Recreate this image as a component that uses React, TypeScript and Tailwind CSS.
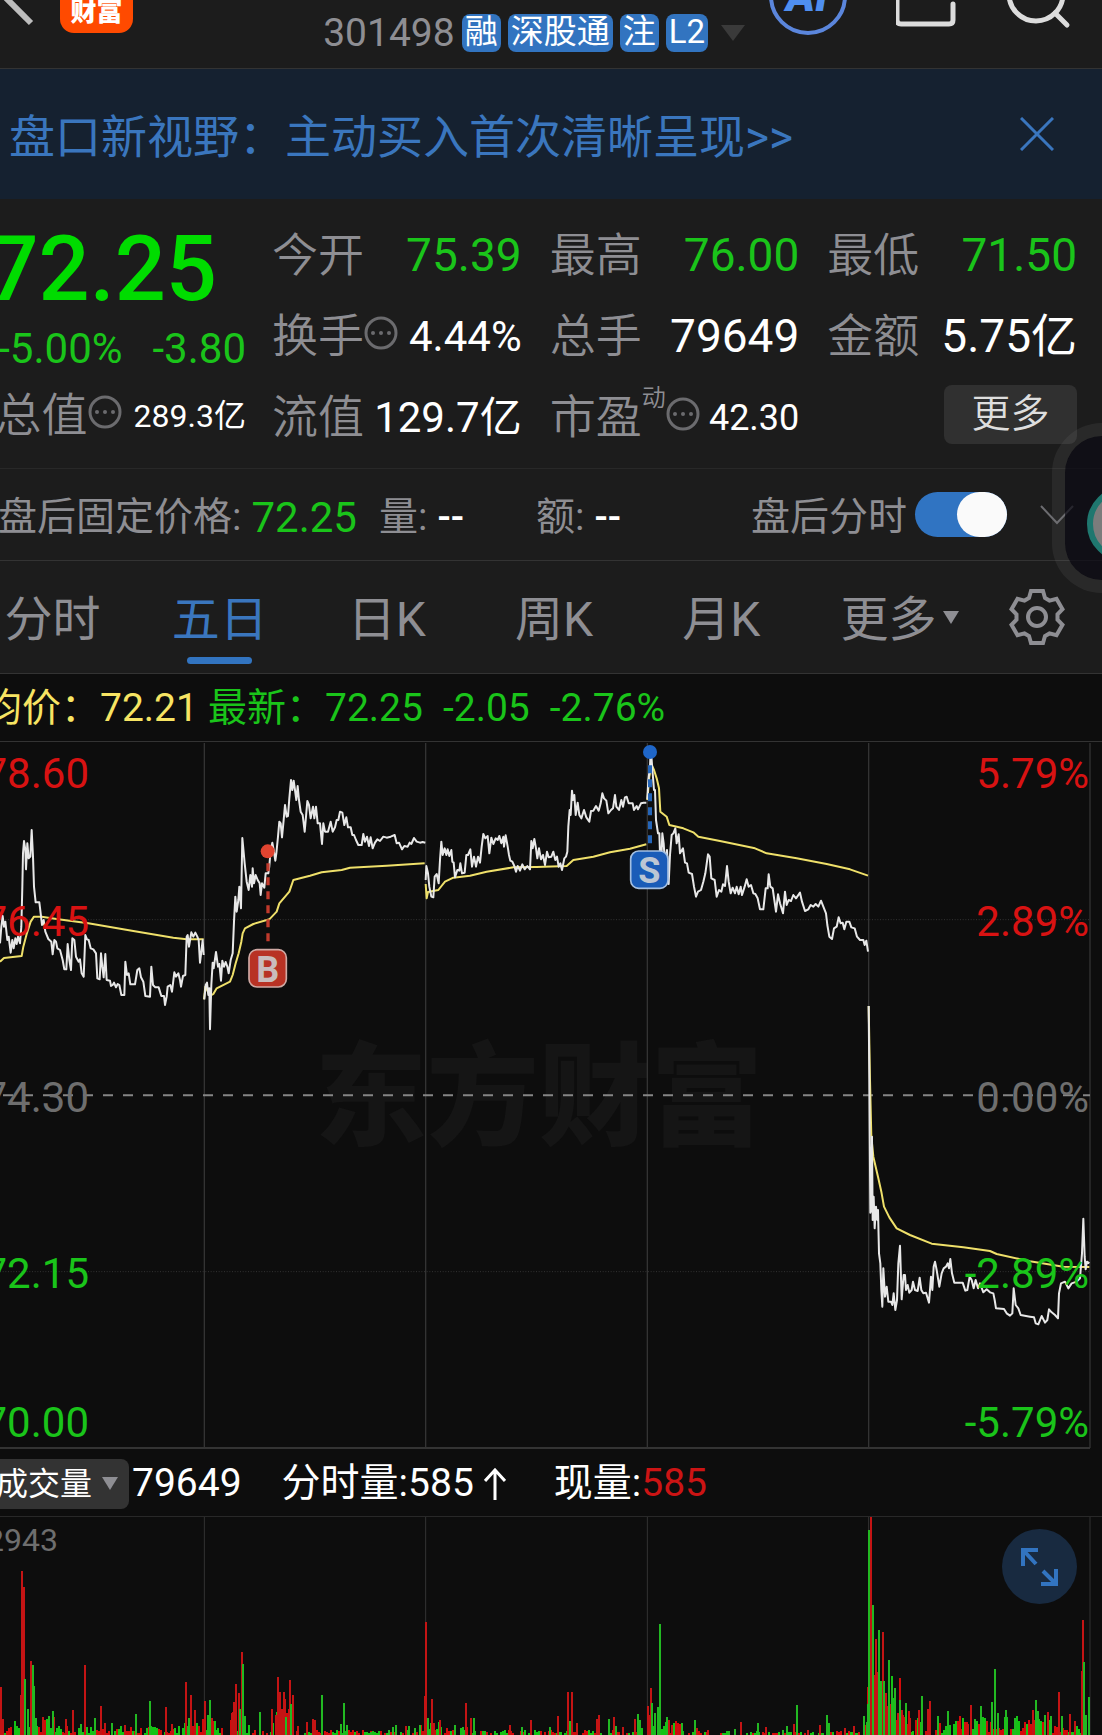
import React, { useState } from "react";

const DAY_LINES = [613, 1277, 1942, 2606, 3270];

// Each session is drawn in its own local space, see the translate on the group.
const SESSIONS = [
  {
    shift: "translate(0 0)",
    avg: "0,665 12,654 65,648 70,620 80,582 92,545 102,530 125,530 175,538 265,550 400,573 520,593 560,598 611,598",
    price:
      "0,610 4,560 8,528 12,560 16,545 22,600 26,590 32,638 37,600 41,625 46,595 50,612 54,590 60,610 64,560 67,440 69,340 72,303 76,330 78,388 82,310 86,355 91,350 95,270 99,350 102,440 107,487 118,487 122,520 126,555 131,540 136,575 145,597 154,605 158,643 163,600 168,605 172,625 180,630 188,660 193,688 199,688 203,612 208,660 213,690 217,595 223,600 228,650 236,665 240,658 245,700 251,710 256,585 261,598 266,600 272,625 280,628 288,640 292,715 299,718 303,640 307,680 311,712 316,642 320,720 330,722 333,738 338,735 342,728 348,742 353,732 358,735 364,765 373,765 376,665 381,705 386,700 391,733 405,733 412,690 418,685 423,712 430,725 436,768 450,770 454,680 459,735 466,742 476,742 484,768 492,768 495,795 500,770 503,740 511,735 516,755 523,697 528,710 535,700 540,720 543,740 549,708 556,705 560,590 563,585 567,620 574,577 580,590 586,578 592,590 596,600 600,668 604,635 608,600 611,645",
  },
  {
    shift: "translate(0 0)",
    avg: "612,778 616,740 630,768 640,762 650,745 690,725 698,705 707,670 716,640 724,605 728,580 735,565 760,552 808,538 830,515 838,490 868,455 880,420 930,407 965,397 1025,390 1050,383 1160,377 1274,370",
    price:
      "613,778 617,735 621,728 625,765 628,745 630,868 634,735 638,668 641,685 648,636 654,680 658,672 663,722 667,662 672,680 677,666 682,680 686,700 692,660 698,640 702,545 706,470 710,515 715,480 718,440 723,505 727,294 734,370 740,425 746,450 751,405 756,440 758,385 762,430 767,405 773,420 779,430 782,465 786,430 793,443 797,400 805,400 808,378 812,330 817,308 821,330 826,362 829,340 834,290 838,245 842,250 846,292 851,240 855,195 860,230 864,228 868,175 873,120 877,150 881,122 885,150 889,180 893,138 897,180 902,215 908,225 914,275 918,230 922,183 927,195 932,235 939,200 943,235 948,200 953,250 960,250 966,312 970,250 975,275 984,275 992,245 998,275 1005,262 1010,240 1015,240 1020,215 1027,218 1033,255 1039,232 1044,262 1052,262 1057,285 1062,285 1068,300 1075,315 1085,315 1090,282 1095,305 1101,290 1107,318 1112,292 1118,325 1125,308 1132,298 1140,303 1150,290 1160,293 1172,290 1184,285 1190,310 1197,308 1206,328 1213,318 1223,320 1229,308 1234,312 1242,294 1250,305 1260,308 1268,306 1276,308",
  },
  {
    shift: "translate(1260 0)",
    avg: "17,432 20,475 24,456 55,450 75,425 100,413 150,407 200,395 280,382 350,381 440,378 460,360 520,350 570,337 630,326 679,313",
    price:
      "17,420 19,378 24,400 28,440 34,470 40,472 44,410 50,402 56,430 60,360 64,305 68,345 74,325 79,345 83,328 88,348 94,330 97,365 101,368 105,412 112,390 118,392 121,370 126,400 134,398 139,345 144,345 151,328 156,380 162,350 168,380 174,350 180,368 185,320 190,282 196,295 203,288 208,340 214,293 220,312 227,295 233,300 238,288 244,310 250,290 252,320 257,286 263,320 267,345 271,362 277,365 283,378 288,395 293,378 300,392 307,373 314,388 322,378 330,388 334,303 338,325 343,297 348,325 352,355 357,325 363,358 369,345 375,375 381,335 386,352 394,350 400,335 406,360 411,350 416,380 421,370 426,390 433,355 438,350 442,335 445,260 449,210 452,225 456,152 459,180 463,165 467,225 473,188 478,225 484,235 492,210 499,232 508,245 513,213 520,212 528,198 536,212 542,190 547,160 552,175 559,182 565,220 573,210 579,205 585,165 589,200 597,210 604,180 609,200 615,172 620,170 626,190 632,190 638,190 642,210 650,198 654,208 663,190 671,188 679,188",
  },
  {
    shift: "translate(1260 0)",
    avg: "682,180 688,110 695,75 702,90 710,115 717,145 721,215 740,230 748,255 790,265 820,277 835,290 900,303 1005,325 1040,340 1130,355 1220,372 1290,388 1344,407",
    price:
      "682,178 685,120 690,80 692,28 695,60 698,100 702,150 705,150 708,240 714,280 718,280 720,340 723,383 727,280 731,310 735,370 741,330 746,432 750,345 755,285 760,280 766,265 770,310 776,283 780,340 789,325 795,368 801,370 806,398 816,402 822,440 828,470 834,455 843,450 850,425 856,400 864,343 869,350 874,415 884,420 890,470 897,450 904,455 909,433 915,438 921,378 926,425 932,460 938,443 945,460 950,440 956,463 962,440 966,465 974,440 980,418 986,440 993,435 1000,460 1006,462 1013,475 1020,508 1030,508 1037,445 1043,445 1046,403 1051,440 1058,445 1063,480 1068,515 1074,463 1080,490 1089,520 1095,455 1100,495 1106,480 1113,483 1120,465 1128,475 1140,458 1146,485 1155,513 1165,508 1172,495 1180,500 1187,492 1195,500 1203,482 1210,500 1218,520 1222,555 1228,590 1236,597 1242,565 1250,560 1256,532 1262,550 1268,548 1273,568 1279,545 1288,545 1294,562 1304,565 1311,590 1320,600 1330,600 1334,615 1339,602 1344,635",
  },
  {
    shift: "translate(2550 720)",
    avg: "56,78 60,300 64,470 70,530 85,595 94,635 102,680 118,712 140,745 180,765 245,791 340,802 420,813 440,822 540,844 640,860 718,861",
    price:
      "56,78 58,300 61,698 63,690 66,470 68,720 71,650 74,745 78,680 82,720 84,690 87,820 91,850 94,930 97,980 100,865 105,950 110,920 115,965 123,965 127,975 131,940 136,990 141,960 145,850 150,797 155,958 161,885 165,885 168,930 173,915 178,938 185,930 189,905 195,930 203,933 209,893 214,930 220,940 228,938 237,968 243,890 247,930 251,860 255,845 260,870 268,920 275,880 281,865 288,860 293,850 297,865 301,837 306,880 313,908 338,908 346,932 352,930 359,890 365,900 371,925 377,900 384,925 390,910 400,937 410,928 420,937 430,940 434,960 438,985 462,987 470,1000 480,1007 487,1000 491,925 497,975 505,985 512,1005 540,1010 552,1012 557,1030 565,1033 575,1008 585,1028 592,1020 597,988 605,997 615,1005 624,1015 627,940 633,910 645,905 655,925 665,910 680,905 690,895 696,820 700,716 704,830 707,868 711,845 718,850",
  },
];

const AXIS = [
  { y: 144, price: "78.60", pct: "5.79%", color: "#d81212" },
  { y: 588, price: "76.45", pct: "2.89%", color: "#d81212" },
  { y: 1116, price: "74.30", pct: "0.00%", color: "#6e6e6e" },
  { y: 1644, price: "72.15", pct: "-2.89%", color: "#1ac41a" },
  { y: 2091, price: "70.00", pct: "-5.79%", color: "#1ac41a" },
];

// x, height
const RED_BARS: [number, number][] = [
  [1, 48], [3, 16], [22, 164], [24, 148], [31, 74], [21, 40], [43, 18], [54, 18], [66, 16], [73, 25], [85, 70],
  [101, 29], [105, 12], [125, 10], [166, 28], [172, 11], [186, 53], [191, 40], [195, 25], [205, 34], [212, 17],
  [232, 22], [234, 33], [236, 51], [239, 42], [242, 83], [272, 26], [276, 20], [278, 58], [280, 43], [284, 43],
  [285, 36], [282, 26], [290, 55], [293, 40], [289, 26], [298, 9], [307, 13], [313, 16], [315, 15], [406, 9],
  [425, 39], [426, 113], [432, 36], [434, 12], [440, 15], [466, 32], [471, 17], [510, 10], [531, 15], [558, 19],
  [568, 43], [572, 43], [577, 12], [597, 16], [599, 20], [614, 18], [623, 8], [635, 16], [648, 29], [651, 47],
  [650, 20], [669, 15], [672, 10], [678, 9], [697, 7], [708, 5], [741, 13], [766, 8], [794, 11], [808, 5],
  [820, 10], [845, 7], [854, 9], [871, 219], [874, 60], [876, 96], [877, 63], [883, 103], [886, 42], [888, 29],
  [891, 31], [898, 22], [902, 25], [910, 17], [919, 25], [928, 26], [930, 34], [968, 11], [971, 30], [987, 14],
  [1033, 25], [1048, 23], [1059, 43], [1070, 21], [1075, 14], [1082, 64], [1083, 115],
];
const GREEN_BARS: [number, number][] = [
  [25, 56], [28, 26], [33, 70], [34, 49], [36, 17], [49, 19], [53, 24], [81, 11], [95, 17], [112, 12], [136, 21],
  [150, 34], [189, 17], [210, 35], [208, 20], [240, 26], [243, 71], [245, 19], [260, 23], [286, 18], [291, 31],
  [322, 40], [341, 11], [344, 32], [347, 10], [371, 3], [389, 5], [393, 8], [396, 10], [409, 9], [415, 7],
  [420, 10], [428, 17], [455, 10], [463, 8], [474, 17], [485, 4], [522, 8], [550, 8], [570, 14], [609, 16],
  [616, 9], [638, 21], [640, 15], [652, 32], [655, 22], [658, 28], [660, 111], [667, 18], [682, 12], [695, 15],
  [729, 4], [735, 6], [758, 12], [783, 5], [787, 9], [797, 30], [827, 20], [829, 12], [864, 19], [867, 13],
  [868, 31], [869, 205], [873, 130], [879, 105], [881, 54], [884, 54], [889, 75], [892, 49], [895, 47],
  [900, 35], [906, 32], [922, 39], [938, 19], [948, 24], [975, 16], [981, 29], [992, 33], [995, 66], [998, 22],
  [1006, 25], [1015, 17], [1036, 35], [1038, 24], [1045, 20], [1051, 19], [1062, 19], [1084, 73], [1086, 20],
  [1089, 38],
];

// start, end, tallest bar of the quiet minutes in between
const QUIET: [number, number, number][] = [
  [0, 60, 16], [60, 180, 9], [180, 215, 20], [215, 230, 8], [230, 250, 28], [250, 272, 6], [272, 294, 30],
  [294, 420, 5], [420, 450, 14], [450, 480, 9], [480, 635, 5], [635, 680, 14], [680, 860, 4], [865, 900, 60],
  [900, 915, 28], [915, 960, 20], [960, 1090, 19],
];

function quietBars() {
  const bars: { x: number; h: number; red: boolean }[] = [];
  let seed = 7;
  for (const [from, to, max] of QUIET) {
    for (let x = from; x < to; x += 2) {
      seed = (seed * 9301 + 49297) % 233280;
      const r = seed / 233280;
      const h = Math.round(r * max);
      if (h > 1) bars.push({ x, h, red: (seed >> 3) % 2 === 0 });
    }
  }
  return bars;
}

const gearPoints = [0, 60, 120, 180, 240, 300]
  .flatMap((deg) => {
    const a = (deg * Math.PI) / 180;
    return [[-8, -19], [-6, -26], [6, -26], [8, -19]].map(
      ([x, y]) =>
        `${(x * Math.cos(a) - y * Math.sin(a)).toFixed(1)},${(x * Math.sin(a) + y * Math.cos(a)).toFixed(1)}`,
    );
  })
  .join(" ");

function Triangle({ className }: { className: string }) {
  return (
    <svg viewBox="0 0 16 13" preserveAspectRatio="none" className={className}>
      <path d="M0 0H16L8 13Z" fill="currentColor" />
    </svg>
  );
}

function MoreDots() {
  return (
    <button aria-label="说明" className="mb-2 shrink-0 text-[#6b6b6e]">
      <svg viewBox="0 0 34 34" className="size-[34px]">
        <circle cx="17" cy="17" r="15" fill="none" stroke="currentColor" strokeWidth="3" />
        <circle cx="9" cy="17" r="2" fill="currentColor" />
        <circle cx="17" cy="17" r="2" fill="currentColor" />
        <circle cx="25" cy="17" r="2" fill="currentColor" />
      </svg>
    </button>
  );
}

function Cell({
  label,
  sup,
  dots,
  children,
}: {
  label: string;
  sup?: string;
  dots?: boolean;
  children: React.ReactNode;
}) {
  return (
    <div className="flex h-[81px] items-center whitespace-nowrap">
      <span className="text-[46px] font-[350] text-[#8e8e93]">{label}</span>
      {sup && <sup className="top-0 mb-10 text-[24px] font-[350] text-[#8e8e93]">{sup}</sup>}
      {dots && <MoreDots />}
      <span className="ml-auto flex items-center">{children}</span>
    </div>
  );
}

function Header() {
  return (
    <header className="flex h-[69px] items-start border-b border-[#333]">
      <button aria-label="返回" className="w-[60px]">
        <svg viewBox="0 0 60 40" className="h-10 w-[60px]">
          <path d="M0 -8L31 23" stroke="#bdbdbd" strokeWidth="6" />
        </svg>
      </button>
      <div className="flex h-[33px] w-[73px] items-end justify-center rounded-b-[14px] bg-[#ff4a00] pb-2 text-[26px] leading-[26px] font-black text-white">
        财富
      </div>
      <div className="ml-auto flex items-center gap-[7px] pt-[10px]">
        <span className="text-[39px] leading-[46px] text-[#8e8e93]">301498</span>
        {["融", "深股通", "注", "L2"].map((tag) => (
          <span key={tag} className="h-[38px] rounded-lg bg-[#3274c0] px-[3px] text-[33px] leading-[36px] text-white">
            {tag}
          </span>
        ))}
        <button aria-label="展开" className="ml-1.5 text-[#3a3a3a]">
          <Triangle className="h-4 w-6" />
        </button>
      </div>
      <div className="ml-6 flex items-start gap-[47px] pr-[31px]">
        <button aria-label="AI" className="h-10">
          <svg viewBox="0 0 80 40" className="h-10 w-20">
            <circle cx="39" cy="-4" r="37" fill="none" stroke="#5b86dc" strokeWidth="4" />
            <text x="17" y="11" fontSize="44" fontWeight="900" fontStyle="italic" fill="#4f8ff0">
              AI
            </text>
          </svg>
        </button>
        <button aria-label="分享" className="h-10">
          <svg viewBox="0 0 64 40" className="h-10 w-16">
            <path d="M1 -4V20Q1 24 5 24H53Q57 24 57 20V4" fill="none" stroke="#dcdcdc" strokeWidth="5" strokeLinecap="round" />
          </svg>
        </button>
        <button aria-label="搜索" className="h-10">
          <svg viewBox="0 0 64 40" className="h-10 w-16">
            <circle cx="29" cy="-6" r="27" fill="none" stroke="#dcdcdc" strokeWidth="5" />
            <path d="M48 13L60 25" stroke="#dcdcdc" strokeWidth="5" strokeLinecap="round" />
          </svg>
        </button>
      </div>
    </header>
  );
}

function Quote() {
  return (
    <section className="flex h-[270px] border-b border-[#282828] pt-4 pr-[25px]">
      <div className="flex w-[246px] shrink-0 flex-col items-end text-[#1ac41a]">
        <div className="flex h-[108px] items-center pr-[29px] text-[90px] font-medium text-[#00dc00]">72.25</div>
        <div className="flex h-[50px] items-center gap-[30px] text-[42px] whitespace-nowrap">
          <span>-5.00%</span>
          <span>-3.80</span>
        </div>
        <div className="flex h-[85px] items-center whitespace-nowrap">
          <span className="text-[46px] font-[350] text-[#8e8e93]">总值</span>
          <MoreDots />
          <span className="ml-3 text-[32px] text-white">289.3亿</span>
        </div>
      </div>
      <div className="ml-[26px] grid flex-1 auto-rows-[81px] grid-cols-3 content-start gap-x-7 text-[46px] text-white">
        <Cell label="今开"><span className="text-[#1ac41a]">75.39</span></Cell>
        <Cell label="最高"><span className="text-[#1ac41a]">76.00</span></Cell>
        <Cell label="最低"><span className="text-[#1ac41a]">71.50</span></Cell>
        <Cell label="换手" dots><span className="text-[42px]">4.44%</span></Cell>
        <Cell label="总手">79649</Cell>
        <Cell label="金额">5.75亿</Cell>
        <Cell label="流值"><span className="text-[42px]">129.7亿</span></Cell>
        <Cell label="市盈" sup="动" dots><span className="text-[36px]">42.30</span></Cell>
        <div className="flex h-[74px] items-center justify-end">
          <button className="h-[59px] w-[133px] rounded-lg bg-[#303030] text-[39px] leading-[59px] font-[350] text-[#dedede]">更多</button>
        </div>
      </div>
    </section>
  );
}

function AfterHours() {
  const [on, setOn] = useState(true);
  return (
    <section className="relative flex h-[92px] items-center border-b border-[#333] pr-7 text-[39px] whitespace-nowrap text-[#8e8e93]">
      <div className="-ml-[2px] flex items-center pt-1.5">
        <span>盘后固定价格:</span>
        <span className="ml-[10px] text-[42px] text-[#1ac41a]">72.25</span>
        <span className="ml-[22px]">量:</span>
        <span className="ml-[10px] font-medium text-white">--</span>
        <span className="ml-[72px]">额:</span>
        <span className="ml-[10px] font-medium text-white">--</span>
      </div>
      <label htmlFor="after-hours" className="ml-auto pt-1.5">盘后分时</label>
      <input
        id="after-hours"
        type="checkbox"
        checked={on}
        onChange={() => setOn(!on)}
        className="ml-2 h-[45px] w-[92px] appearance-none rounded-full bg-[#555] before:block before:h-[45px] before:w-[50px] before:rounded-full before:bg-[#fafafa] checked:bg-[#3074c2] checked:before:ml-[42px]"
      />
      <button aria-label="展开" className="ml-[33px]">
        <svg viewBox="0 0 34 20" className="h-5 w-[34px]">
          <path d="M1 1L17 18L33 1" fill="none" stroke="#6c6c70" strokeWidth="2" />
        </svg>
      </button>
      {/* floating assistant, half off the right edge */}
      <div className="absolute -top-[46px] -right-[120px] h-[170px] w-[170px] rounded-[50px] border-[13px] border-[#7a7a7a]/15 bg-[#0b0a14]/70 bg-clip-padding">
        <div className="absolute top-[50px] left-[22px] size-[76px] rounded-full border-[6px] border-[#1f776f] bg-[#7c7c7c]" />
      </div>
    </section>
  );
}

function Tabs() {
  const [active, setActive] = useState("五日");
  return (
    <nav className="flex h-[113px] border-b border-[#333]">
      <div className="-ml-[31px] grid flex-1 grid-cols-6">
        {["分时", "五日", "日K", "周K", "月K", "更多"].map((tab) => (
          <button
            key={tab}
            onClick={() => setActive(tab)}
            className={`relative flex items-center justify-center text-[48px] ${
              tab === active ? "text-[#3a76be]" : "text-[#8e8e93]"
            }`}
          >
            <span className="pt-1.5">{tab}</span>
            {tab === "更多" && <Triangle className="absolute right-[13px] h-[13px] w-4" />}
            {tab === active && <span className="absolute bottom-[9px] h-[7px] w-[65px] rounded-full bg-[#3274c0]" />}
          </button>
        ))}
      </div>
      <button aria-label="设置" className="flex w-[130px] items-center justify-center">
        <svg viewBox="-29 -29 58 58" className="size-[58px]" fill="none" stroke="#8e8e93" strokeWidth="4">
          <polygon points={gearPoints} />
          <circle r="9" />
        </svg>
      </button>
    </nav>
  );
}

function PriceChart() {
  return (
    <svg viewBox="0 6 3306 2121" className="block w-full">
      <text x="944" y="1192" fontSize="336" fontWeight="900" fill="#151515">东方财富</text>
      <g stroke="#333" strokeWidth="3">
        {DAY_LINES.map((x) => (
          <path key={x} d={`M${x} 9V2124`} strokeWidth="4" />
        ))}
        <path d="M0 539H3270M0 1595H3270" strokeDasharray="3 5" />
        <path d="M0 2124H3270" strokeWidth="6" />
      </g>
      <path d="M-51 1066H3270" stroke="#858585" strokeWidth="6" strokeDasharray="30 30" />
      {SESSIONS.map((s) => (
        <g key={s.avg} transform={s.shift} fill="none" strokeLinejoin="round">
          <polyline points={s.avg} stroke="#efe06a" strokeWidth="6" />
          <polyline points={s.price} stroke="#e8e8e8" strokeWidth="6" />
        </g>
      ))}
      <g>
        <path d="M804 370V612" stroke="#c03a2c" strokeWidth="10" strokeDasharray="24 18" />
        <circle cx="803" cy="334" r="21" fill="#e04430" />
        <rect x="747" y="629" width="112" height="112" rx="24" fill="#b83224" stroke="#cfa9a4" strokeWidth="5" />
        <text x="803" y="725" textAnchor="middle" fontSize="108" fontWeight="700" fill="#c9bcbc">B</text>
      </g>
      <g>
        <path d="M1950 76V318" stroke="#2565b8" strokeWidth="12" strokeDasharray="24 18" />
        <circle cx="1950" cy="36" r="21" fill="#1f66c8" />
        <rect x="1892" y="333" width="112" height="112" rx="24" fill="#1a5cb8" stroke="#a3bfe2" strokeWidth="5" />
        <text x="1948" y="429" textAnchor="middle" fontSize="108" fontWeight="700" fill="#bcc6d4">S</text>
      </g>
      <g fontSize="126">
        {AXIS.map((a) => (
          <g key={a.pct} fill={a.color}>
            <text x="267" y={a.y} textAnchor="end">{a.price}</text>
            <text x="3267" y={a.y} textAnchor="end">{a.pct}</text>
          </g>
        ))}
      </g>
    </svg>
  );
}

function VolumeChart() {
  return (
    <div className="relative">
      <svg viewBox="0 0 1102 218" className="block w-full">
        {DAY_LINES.map((x) => (
          <path key={x} d={`M${x / 3} 0V218`} stroke="#333" />
        ))}
        <text x="58" y="34" textAnchor="end" fontSize="32" fill="#6e6e6e">2943</text>
        {quietBars().map((b) => (
          <rect key={b.x} x={b.x} y={218 - b.h} width="2" height={b.h} fill={b.red ? "#d40a0a" : "#14c414"} />
        ))}
        {RED_BARS.map(([x, h]) => (
          <rect key={x} x={x - 1} y={218 - h} width="2" height={h} fill="#c41414" />
        ))}
        {GREEN_BARS.map(([x, h]) => (
          <rect key={x} x={x - 1} y={218 - h} width="2" height={h} fill="#22b822" />
        ))}
      </svg>
      <button aria-label="全屏" className="absolute top-3 right-[25px] size-[75px] rounded-full bg-[#182a40]">
        <svg viewBox="0 0 75 75" className="size-[75px]" fill="none" stroke="#3274c0" strokeWidth="4">
          <path d="M36 21H21V37M22 22L34 35M54 40V55H39M41 42L53 54" />
        </svg>
      </button>
    </div>
  );
}

export default function App() {
  return (
    <main className="min-h-screen overflow-hidden bg-[#0d0d0d] font-['Roboto','Noto_Sans_CJK_SC',sans-serif]">
      <div className="bg-[#1c1c1c]">
        <Header />
        <div className="flex h-[130px] items-center justify-between bg-[#152130] pr-12 pl-[9px] text-[#3a76be]">
          <a href="#view" className="pt-1.5 text-[46px]">盘口新视野：主动买入首次清晰呈现&gt;&gt;</a>
          <button aria-label="关闭">
            <svg viewBox="0 0 34 34" className="size-[34px]">
              <path d="M1 1L33 33M33 1L1 33" stroke="currentColor" strokeWidth="3" />
            </svg>
          </button>
        </div>
        <Quote />
        <AfterHours />
        <Tabs />
      </div>
      <div className="flex h-[68px] items-center border-b border-[#333] pt-0.5 text-[39px] whitespace-nowrap text-[#1ac41a]">
        <span className="-ml-[17px] text-[#f7e463]">均价：72.21</span>
        <span className="ml-[10px]">最新：72.25</span>
        <span className="ml-5">-2.05</span>
        <span className="ml-5">-2.76%</span>
      </div>
      <PriceChart />
      <div className="flex h-[68px] items-center border-b border-[#282828] pt-0.5 text-[39px] whitespace-nowrap text-white">
        <div className="relative -ml-2 flex">
          <select aria-label="指标" className="h-[50px] w-[137px] appearance-none rounded-lg bg-[#333] pl-1 text-[32px] leading-[46px]">
            <option>成交量</option>
            <option>成交额</option>
          </select>
          <Triangle className="pointer-events-none absolute top-[18px] right-[11px] h-[13px] w-4 text-[#8e8e93]" />
        </div>
        <span className="ml-[3px]">79649</span>
        <span className="ml-10">分时量:585</span>
        <svg viewBox="0 0 22 32" className="ml-[10px] h-8 w-[22px]" fill="none" stroke="#fff" strokeWidth="3">
          <path d="M11 32V2M1 13L11 2L21 13" />
        </svg>
        <span className="ml-12">
          现量:<span className="text-[#cc1414]">585</span>
        </span>
      </div>
      <VolumeChart />
    </main>
  );
}
